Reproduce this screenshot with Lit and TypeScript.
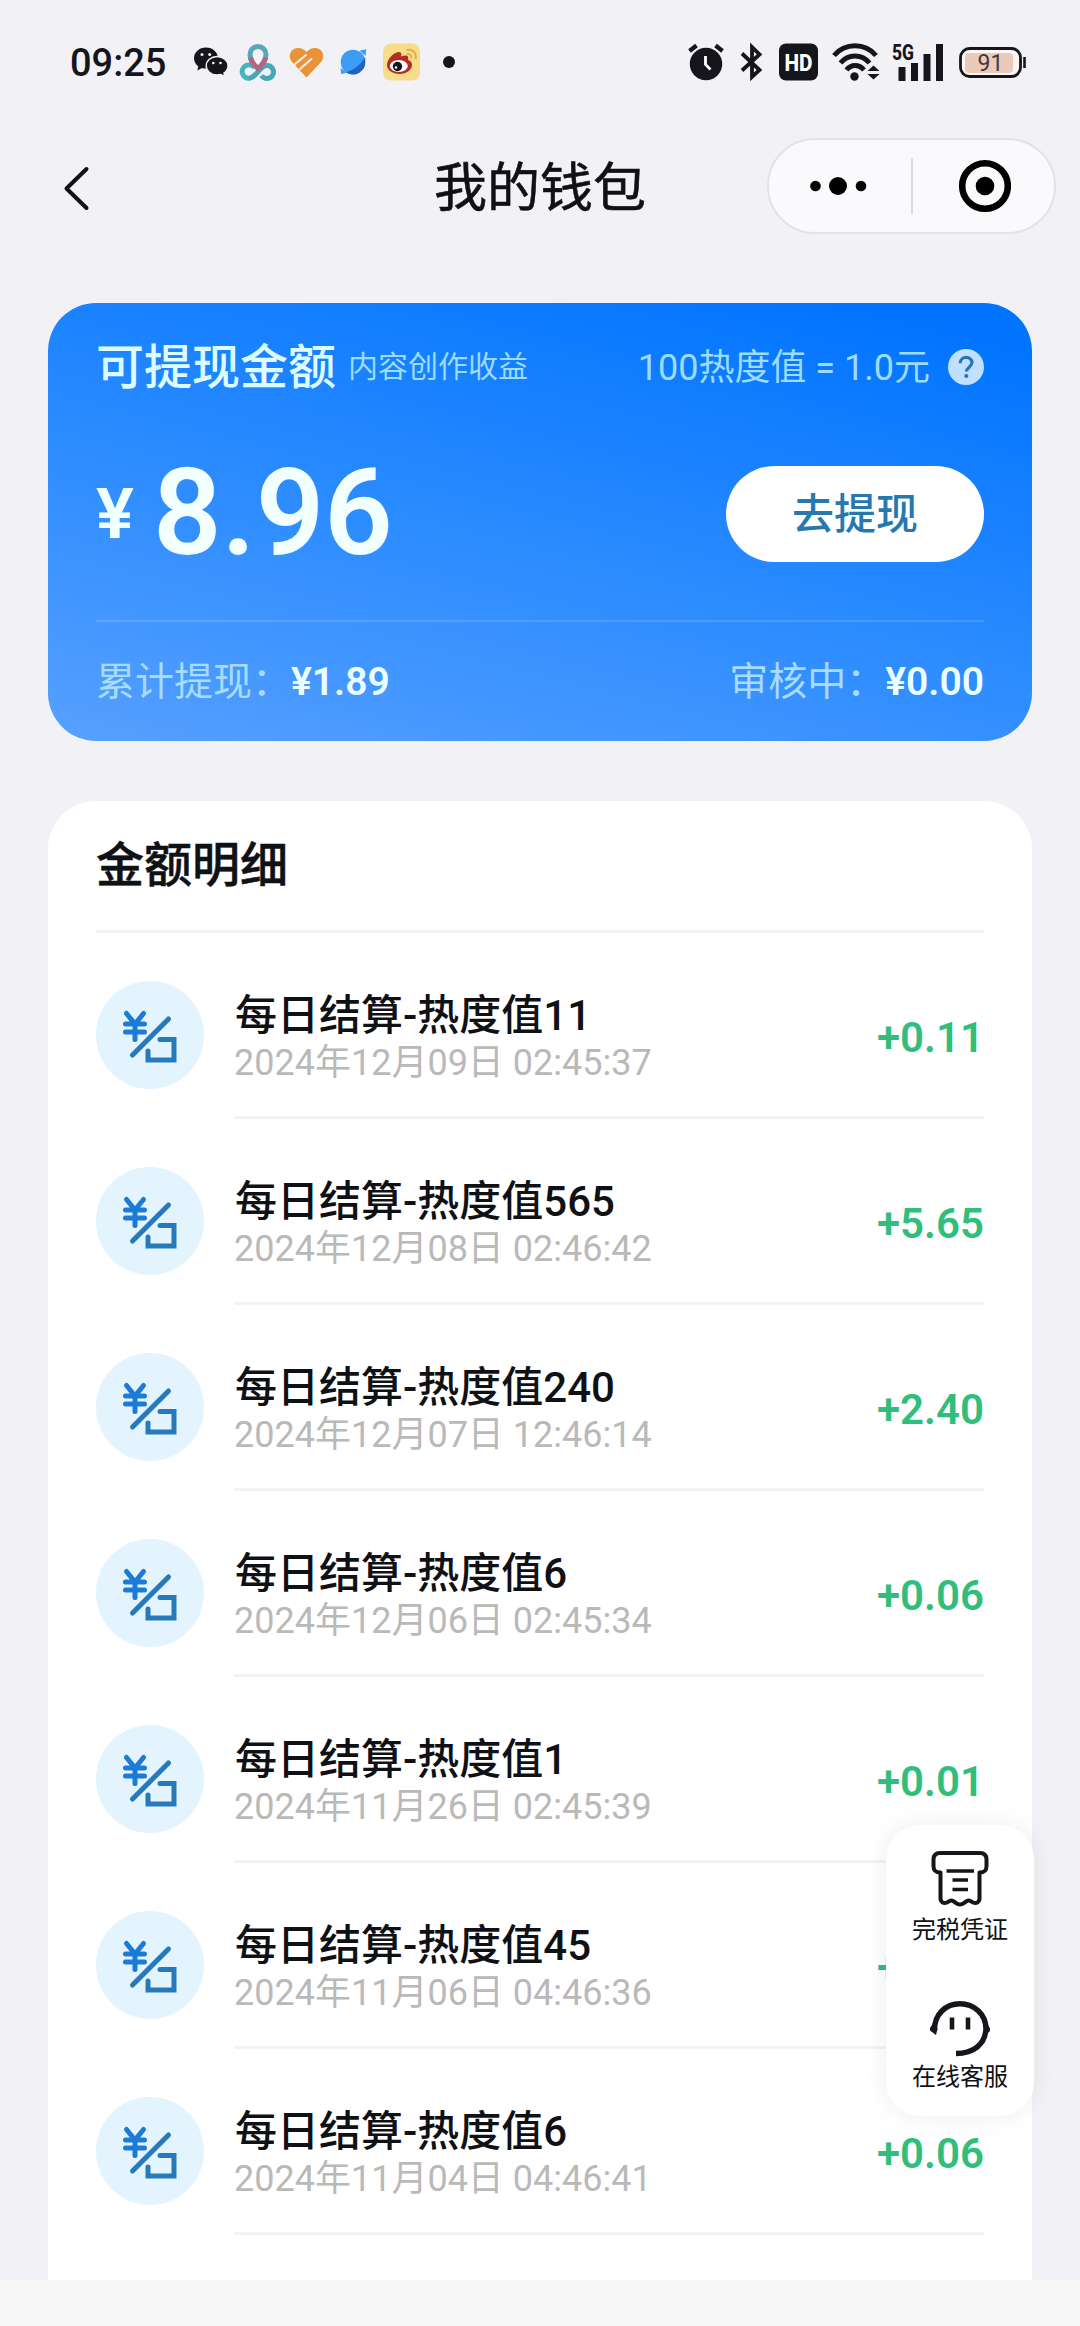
import { LitElement, html, css } from "lit";
import { customElement, property } from "lit/decorators.js";

interface Entry {
  title: string;
  time: string;
  amount: string;
}

const ENTRIES: Entry[] = [
  { title: "每日结算-热度值11", time: "2024年12月09日 02:45:37", amount: "+0.11" },
  { title: "每日结算-热度值565", time: "2024年12月08日 02:46:42", amount: "+5.65" },
  { title: "每日结算-热度值240", time: "2024年12月07日 12:46:14", amount: "+2.40" },
  { title: "每日结算-热度值6", time: "2024年12月06日 02:45:34", amount: "+0.06" },
  { title: "每日结算-热度值1", time: "2024年11月26日 02:45:39", amount: "+0.01" },
  { title: "每日结算-热度值45", time: "2024年11月06日 04:46:36", amount: "+0.45" },
  { title: "每日结算-热度值6", time: "2024年11月04日 04:46:41", amount: "+0.06" },
];

@customElement("status-bar")
export class StatusBar extends LitElement {
  static styles = css`
    :host {
      display: flex;
      justify-content: space-between;
      align-items: center;
      height: 124px;
      padding: 0 53px 0 70px;
      color: #15161b;
    }
    .group {
      display: flex;
      align-items: center;
    }
    .time {
      font-size: 38px;
      font-weight: 500;
      line-height: 38px;
      width: 100px;
      padding-top: 2px;
      white-space: nowrap;
    }
    svg {
      display: block;
      flex: none;
      overflow: visible;
    }
    .left {
      gap: 12.6px;
    }
    .left .time {
      margin-right: 11px;
    }
    .right {
      gap: 15px;
    }
    .label {
      font-family: Roboto, "Liberation Sans", sans-serif;
    }
  `;

  render() {
    return html`
      <div class="group left">
        <span class="time">09:25</span>
        <svg width="34" height="38" viewBox="0 0 34 38">
          <path d="M12 4.500C5.200 4.500 0 9.300 0 15.200c0 3.300 1.700 6.200 4.300 8.200L3.300 27.500l4.700-2.600c1.300.4 2.600.6 4 .6 6.800 0 12-4.500 12-10.300S18.800 4.500 12 4.500z" fill="#15161b"/>
          <path d="M23 13.500c-6 0-10.800 4.200-10.800 9.300S17 32 23 32c1.300 0 2.500-.2 3.700-.5l4.400 2.200-1.200-3.500c2.500-1.700 4.100-4.400 4.100-7.400 0-5.100-5-9.300-11-9.300z" fill="#15161b" stroke="#f2f1f6" stroke-width="1.400"/>
          <circle cx="8" cy="11.500" r="1.500" fill="#f2f1f6"/><circle cx="15.700" cy="11.500" r="1.500" fill="#f2f1f6"/>
          <circle cx="19.300" cy="20" r="1.300" fill="#f2f1f6"/><circle cx="26.500" cy="20" r="1.300" fill="#f2f1f6"/>
        </svg>
        <svg width="36" height="38" viewBox="0 0 36 38" fill="none" stroke-width="5">
          <path d="M10 35.200A6.700 6.700 0 1 1 14.500 25" stroke="#45b3c2"/>
          <path d="M9 35.200c3.500 0 6-3 10-7.500 2.500-3 5-5.200 8-5.200a6.500 6.500 0 1 1-5.500 10" stroke="#45a8b7"/>
          <path d="M18 25.500C12.500 21 10 16.500 10 11.500a8 8 0 0 1 16 0c0 5-2.500 9.500-8 14z" stroke="#58a9b8"/>
          <path d="M10.500 14.500c1 4 3.500 8 7.500 11 4-3 6.500-7 7.500-11" stroke="#b8647f"/>
        </svg>
        <svg width="35" height="38" viewBox="0 0 35 38">
          <path d="M17.500 34.500L3 19C-1.500 14 1 5.500 8.500 5c3.500-.2 6.500 1.200 9 4 2.500-2.800 5.500-4.200 9-4C34 5.500 36.500 14 32 19z" fill="#ea9236"/>
          <path d="M5 22L17.500 11.500M10.500 26.500L23 15.500" stroke="#f7ecea" stroke-width="2.200" fill="none"/>
        </svg>
        <svg width="34" height="38" viewBox="0 0 34 38">
          <circle cx="17" cy="19" r="12.300" fill="#3d9cf5"/>
          <path d="M29.200 18A12.300 12.300 0 0 1 10 29.200C18 27 24 22.500 29.200 14z" fill="#1d62c4"/>
          <path d="M23.500 7.500l6.800-1.200L29.500 13zM4.500 25l.8 6.200 5.500-1.600z" fill="#3d9cf5"/>
        </svg>
        <svg width="37" height="38" viewBox="0 0 37 38">
          <rect x="0" y="0.500" width="37" height="37" rx="8" fill="#f8dc8a"/>
          <path d="M16 9c-5 0-12 7-12 13 0 5.500 6 9 12.500 9C24 31 29 26.500 29 22c0-3-2-4.500-4-5 .8-2.500 0-4.500-2.500-4.500-1.500 0-3 .5-4.500 1C19 10.500 18 9 16 9z" fill="#b52c25"/>
          <ellipse cx="15.800" cy="23" rx="9" ry="6" fill="#fff"/>
          <circle cx="14.500" cy="23.500" r="4.700" fill="#15161b"/>
          <circle cx="13" cy="24.500" r="1.300" fill="#fff"/>
          <path d="M23.500 7c6-1.500 10.500 3 9 9M24 11c3-.5 5 1.500 4.300 4.500" fill="none" stroke="#dfab45" stroke-width="1.800"/>
        </svg>
        <svg width="42" height="38" viewBox="0 0 42 38"><circle cx="16" cy="19" r="6" fill="#15161b"/></svg>
      </div>
      <div class="group right">
        <svg width="38" height="38" viewBox="0 0 38 38">
          <circle cx="19" cy="21" r="16.200" fill="#15161b"/>
          <path d="M2.500 8L9.500 2.500M35.500 8L28.500 2.500" stroke="#15161b" stroke-width="4.200"/>
          <path d="M18.500 13v8.500l5 5" fill="none" stroke="#fff" stroke-width="2.800"/>
        </svg>
        <svg width="24" height="38" viewBox="0 0 24 38">
          <path d="M2 10.500L19.500 27 12 34V4L19.500 11.500 2 27.500" fill="none" stroke="#15161b" stroke-width="3.800"/>
        </svg>
        <svg width="39" height="38" viewBox="0 0 39 38">
          <rect width="39" height="37" y="0.500" rx="7" fill="#15161b"/>
          <text class="label" x="5.500" y="27.500" font-size="24" font-weight="800" textLength="28" lengthAdjust="spacingAndGlyphs" fill="#fff">HD</text>
        </svg>
        <svg width="45" height="38" viewBox="0 0 45 38">
          <g fill="none" stroke="#15161b" stroke-width="5">
            <path d="M1 12.500C12-.5 32-.5 43 12.500"/>
            <path d="M7.500 20C15 10.500 29 10.500 36.500 20"/>
            <path d="M13.500 27C18 21 26 21 31 27"/>
          </g>
          <circle cx="21.500" cy="33.500" r="4.200" fill="#15161b"/>
          <path d="M34.500 28l6-5.500 6 5.500zM34.500 31l6 5.500 6-5.500z" fill="#15161b"/>
        </svg>
        <svg width="51" height="38" viewBox="0 0 51 38">
          <text class="label" x="-1" y="16.500" font-size="22" font-weight="800" textLength="22" lengthAdjust="spacingAndGlyphs" fill="#15161b">5G</text>
          <path d="M5.500 24h7v14h-7zM18 20h7v18h-7zM30.500 11h7v27h-7zM43 1h7v37h-7z" fill="#15161b"/>
        </svg>
        <svg width="68" height="38" viewBox="0 0 68 38">
          <rect x="1.500" y="5.500" width="60" height="28" rx="9" fill="#fdf6f2" stroke="#15161b" stroke-width="2.800"/>
          <rect x="6" y="10" width="48" height="20" rx="4" fill="#e9cabb"/>
          <path d="M65.500 14v11" stroke="#15161b" stroke-width="2.600"/>
          <text class="label" x="18.500" y="28" font-size="23" fill="#4c3632">91</text>
        </svg>
      </div>
    `;
  }
}

@customElement("nav-bar")
export class NavBar extends LitElement {
  static styles = css`
    :host {
      display: grid;
      grid-template-columns: 1fr auto 1fr;
      align-items: center;
      height: 124px;
      padding: 0 24px 0 60px;
      color: #101114;
    }
    .back {
      display: block;
      padding-top: 4px;
    }
    .title {
      font-size: 53px;
      line-height: 60px;
      margin-left: -36px;
      padding-top: 5px;
      -webkit-text-stroke: 0.6px currentColor;
    }
    .capsule {
      justify-self: end;
      box-sizing: border-box;
      display: flex;
      align-items: center;
      width: 289px;
      height: 96px;
      border: 2px solid #e3e2e7;
      border-radius: 48px;
      background: #fafafd;
    }
    .half {
      flex: 1;
      display: flex;
      align-items: center;
      justify-content: center;
    }
    .rule {
      width: 2px;
      height: 56px;
      background: #dcdce0;
    }
  `;

  render() {
    return html`
      <svg class="back" width="34" height="48" viewBox="0 0 34 48">
        <path d="M26.500 5L6.500 24.500 26.500 44" fill="none" stroke="#101114" stroke-width="4" stroke-linecap="round" stroke-linejoin="round"/>
      </svg>
      <span class="title">我的钱包</span>
      <div class="capsule">
        <div class="half">
          <svg width="60" height="24" viewBox="0 0 60 24">
            <circle cx="5.500" cy="12" r="5.300"/><circle cx="28" cy="12" r="9"/><circle cx="51" cy="12" r="5.300"/>
          </svg>
        </div>
        <div class="rule"></div>
        <div class="half">
          <svg width="56" height="56" viewBox="0 0 56 56">
            <circle cx="30" cy="28" r="22.800" fill="none" stroke="#000" stroke-width="6.600"/><circle cx="30" cy="28" r="9.300"/>
          </svg>
        </div>
      </div>
    `;
  }
}

@customElement("balance-card")
export class BalanceCard extends LitElement {
  static styles = css`
    :host {
      box-sizing: border-box;
      display: flex;
      flex-direction: column;
      height: 438px;
      padding: 0 48px;
      border-radius: 48px;
      background: linear-gradient(194deg, #0074ff 6%, #2d8cff 56%, #559fff 98%);
      color: #f2ffff;
    }
    .row {
      display: flex;
      align-items: center;
      justify-content: space-between;
      white-space: nowrap;
    }
    .top {
      height: 127px;
    }
    .middle {
      height: 166px;
      padding-top: 1px;
    }
    .bottom {
      height: 119px;
      border-top: 2px solid rgba(255, 255, 255, 0.14);
      margin-top: 23px;
      font-size: 39px;
      line-height: 60px;
    }
    .pair {
      display: flex;
      align-items: center;
    }
    .heading {
      font-size: 48px;
      font-weight: 500;
      line-height: 60px;
      padding-top: 2px;
      color: #dcfcff;
    }
    .note {
      font-size: 30px;
      line-height: 40px;
      margin-left: 12px;
      color: #9bdcff;
    }
    .rate {
      font-size: 36px;
      line-height: 48px;
      padding-top: 2px;
      color: #9bdcff;
      margin-right: 18px;
    }
    .muted {
      color: #a5dcff;
    }
    .strong {
      font-weight: 600;
      color: #eaffff;
    }
    .yen {
      font-size: 71px;
      font-weight: 600;
      line-height: 120px;
      padding-bottom: 1px;
      width: 57px;
    }
    .sum {
      font-size: 120px;
      font-weight: 600;
      line-height: 160px;
      padding-bottom: 3px;
    }
    .withdraw {
      width: 258px;
      height: 96px;
      padding: 2px 0 0;
      border: 0;
      border-radius: 48px;
      background: #fff;
      color: #2878b0;
      font: inherit;
      font-size: 42px;
      font-weight: 500;
      line-height: 60px;
    }
    svg {
      display: block;
    }
  `;

  render() {
    return html`
      <div class="row top">
        <div class="pair"><span class="heading">可提现金额</span><span class="note">内容创作收益</span></div>
        <div class="pair">
          <span class="rate">100热度值 = 1.0元</span>
          <svg width="36" height="36" viewBox="0 0 36 36">
            <circle cx="18" cy="18" r="18" fill="#bfe0ff"/>
            <path d="M12.200 14.200c0-7.800 11.800-7.600 11.800-.6 0 4.500-5.600 4.600-5.600 9" fill="none" stroke="#2877b5" stroke-width="3.200"/>
            <circle cx="18.300" cy="27" r="2.100" fill="#2877b5"/>
          </svg>
        </div>
      </div>
      <div class="row middle">
        <div class="pair"><span class="yen">¥</span><span class="sum">8.96</span></div>
        <button class="withdraw">去提现</button>
      </div>
      <div class="row bottom">
        <div class="pair"><span class="muted">累计提现：</span><span class="strong">¥1.89</span></div>
        <div class="pair"><span class="muted">审核中：</span><span class="strong">¥0.00</span></div>
      </div>
    `;
  }
}

@customElement("entry-row")
export class EntryRow extends LitElement {
  @property({ attribute: false }) entry!: Entry;

  static styles = css`
    :host {
      display: flex;
      gap: 30px;
      height: 186px;
    }
    .badge {
      display: block;
      flex: none;
      margin-top: 48px;
    }
    .body {
      flex: 1;
      box-sizing: border-box;
      display: flex;
      align-items: center;
      justify-content: space-between;
      padding-top: 26px;
      border-bottom: 3px solid #f3f3f4;
      white-space: nowrap;
    }
    .title {
      font-size: 42px;
      font-weight: 500;
      line-height: 48px;
      padding: 3px 0 0 1px;
      color: #101114;
    }
    .time {
      font-size: 36px;
      line-height: 46px;
      color: #b9b9ba;
    }
    .amount {
      font-size: 42px;
      font-weight: 600;
      line-height: 48px;
      color: #2fbe7c;
    }
  `;

  render() {
    return html`
      <svg class="badge" width="108" height="108" viewBox="0 0 108 108">
        <circle cx="54" cy="54" r="54" fill="#e4f4ff"/>
        <g fill="none" stroke="#2679ba" stroke-width="5" stroke-linecap="round" stroke-linejoin="round">
          <path d="M30.500 32.500l8.500 10.500 8.500-10.500M39 43v15.500M29.500 43h19M29.500 51h19" stroke="#1b7bd6"/>
          <path d="M72.500 38L36.500 74"/>
          <path d="M64 58.500h14v20.500H52v-9" stroke-linejoin="miter"/>
        </g>
      </svg>
      <div class="body">
        <div>
          <div class="title">${this.entry.title}</div>
          <div class="time">${this.entry.time}</div>
        </div>
        <span class="amount">${this.entry.amount}</span>
      </div>
    `;
  }
}

@customElement("float-menu")
export class FloatMenu extends LitElement {
  static styles = css`
    :host {
      box-sizing: border-box;
      display: flex;
      flex-direction: column;
      align-items: center;
      width: 148px;
      height: 291px;
      padding-top: 24px;
      border-radius: 34px;
      background: #fff;
      box-shadow: 0 0 26px rgba(0, 0, 0, 0.07);
    }
    .item {
      flex: none;
      display: flex;
      flex-direction: column;
      align-items: center;
      gap: 5px;
      height: 148px;
      font-size: 24px;
      line-height: 32px;
      color: #101114;
    }
    .item.service {
      height: auto;
      padding-top: 2px;
      gap: 2px;
    }
    svg {
      display: block;
      overflow: visible;
    }
  `;

  render() {
    return html`
      <div class="item">
        <svg width="60" height="60" viewBox="0 0 60 60" fill="none" stroke="#15161b" stroke-width="4" stroke-linejoin="round">
          <path d="M10.500 23.500C5 23.500 3.500 21 3.500 17V10.500C3.500 6 5.500 4 10 4h40c4.500 0 6.500 2 6.500 6.500V17c0 4-1.500 6.500-7 6.500V49c0 4-3 6-6.500 4.500-2.500-1-3.500-3-6-1.500-3.500 2-4 3.500-7 3.500s-3.500-1.500-7-3.500c-2.500-1.500-3.500.5-6 1.500-3.500 1.500-6.500-.5-6.500-4.500z"/>
          <path d="M16.500 22h27.500M22.500 31h15.500M22.500 40.500h15.500" stroke-width="3.600"/>
        </svg>
        <span>完税凭证</span>
      </div>
      <div class="item service">
        <svg width="60" height="60" viewBox="0 0 60 60" fill="none" stroke="#15161b">
          <path d="M4.500 32C4 15 16 4.700 30 4.700S56 15 56 30C55 45 44 54.500 26 54.500" stroke-width="5.400"/>
          <path d="M0 29l4-6 3.500 7-1.500 6-6-4.500zM60 29.500l-3.500-6.500-3 11 2 2 4.500-4z" fill="#15161b" stroke="none"/>
          <path d="M22 18.500v12M38 18.500v12" stroke-width="4.600"/>
        </svg>
        <span>在线客服</span>
      </div>
    `;
  }
}

@customElement("app-root")
export class AppRoot extends LitElement {
  static styles = css`
    :host {
      position: relative;
      display: flex;
      flex-direction: column;
      height: 2326px;
      overflow: hidden;
      background: #f2f1f6;
      font-family: Roboto, "Noto Sans CJK SC", sans-serif;
    }
    .main {
      display: flex;
      flex-direction: column;
      gap: 60px;
      padding: 55px 48px 0;
    }
    .details {
      box-sizing: border-box;
      height: 1479px;
      padding: 0 48px;
      border-radius: 48px 48px 0 0;
      background: #fff;
    }
    .heading {
      box-sizing: border-box;
      height: 132px;
      padding-top: 2px;
      border-bottom: 3px solid #f3f3f4;
      font-size: 48px;
      font-weight: 500;
      line-height: 126px;
      color: #101114;
      -webkit-text-stroke: 0.5px currentColor;
    }
    .footer {
      flex: 1;
      background: #f7f7f7;
    }
    .float {
      position: absolute;
      left: 886px;
      top: 1825px;
    }
  `;

  render() {
    return html`
      <status-bar></status-bar>
      <nav-bar></nav-bar>
      <div class="main">
        <balance-card></balance-card>
        <section class="details">
          <div class="heading">金额明细</div>
          ${ENTRIES.map((entry) => html`<entry-row .entry=${entry}></entry-row>`)}
        </section>
      </div>
      <div class="footer"></div>
      <float-menu class="float"></float-menu>
    `;
  }
}
